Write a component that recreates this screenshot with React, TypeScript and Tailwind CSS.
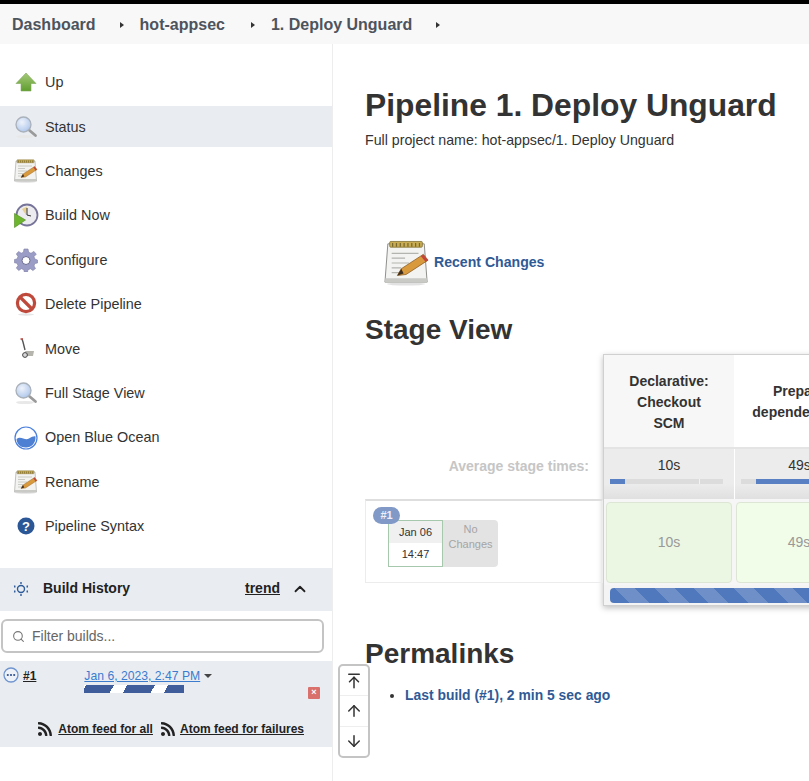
import { ArrowDown, ArrowUp, ArrowUpToLine, ChevronUp, Search } from "lucide-react"
import { FaRss } from "react-icons/fa"

function UpIcon() {
  return (
    <svg width="24" height="24" viewBox="0 0 24 24">
      <defs>
        <linearGradient id="up" x1="0" y1="0" x2="0" y2="1">
          <stop offset="0" stopColor="#a6c97a" />
          <stop offset="1" stopColor="#5f9e2e" />
        </linearGradient>
      </defs>
      <path d="M12 2 L22 12.5 H17 V20 H7 V12.5 H2 Z" fill="url(#up)" stroke="#7fa75a" strokeWidth="0.6" />
    </svg>
  )
}

function GlassIcon() {
  return (
    <svg width="24" height="24" viewBox="0 0 24 24">
      <defs>
        <radialGradient id="glass" cx="0.4" cy="0.35" r="0.8">
          <stop offset="0" stopColor="#eef3fb" />
          <stop offset="1" stopColor="#a3bfe9" />
        </radialGradient>
      </defs>
      <ellipse cx="11" cy="21.5" rx="9" ry="1.6" fill="#e8e8e8" />
      <path d="M15 15 L21.5 20.5" stroke="#9a9a9a" strokeWidth="2.8" strokeLinecap="round" />
      <circle cx="9.5" cy="9.5" r="7.5" fill="url(#glass)" stroke="#aab1ba" strokeWidth="1.3" />
    </svg>
  )
}

function NoteIcon({ size = 24 }: { size?: number }) {
  return (
    <svg width={size} height={size} viewBox="0 0 48 48">
      <ellipse cx="23" cy="46" rx="20" ry="1.6" fill="#e2e2e2" />
      <path d="M4 4 H42 L45 44 H1 Z" fill="#f3f3f1" stroke="#8a8a86" strokeWidth="1" />
      <path d="M1.5 40 H44.7 L45 44.5 H1 Z" fill="#c9c9c6" />
      <rect x="6" y="1.5" width="34" height="6" rx="1" fill="#c9ac52" stroke="#7b6a2d" strokeWidth="0.8" />
      <path d="M9 3 V7 M13 3 V7 M17 3 V7 M21 3 V7 M25 3 V7 M29 3 V7 M33 3 V7 M37 3 V7" stroke="#77682f" strokeWidth="1.3" />
      <path d="M8 14 H36 M8 19 H22 M8 24 H26 M8 29 H18 M8 34 H16" stroke="#b3b3b0" strokeWidth="1.3" />
      <path d="M14 37 L18 30 L41 15 L46 21 L23 36 Z" fill="#d99a3d" stroke="#8a5a22" strokeWidth="0.8" />
      <path d="M41 15 L46 21 L43.5 23 L38.5 17 Z" fill="#c2453b" />
      <path d="M14 37 L18 30 L20.5 35 Z" fill="#3d2d1e" />
    </svg>
  )
}

function BuildIcon() {
  return (
    <svg width="26" height="26" viewBox="0 0 26 26">
      <circle cx="14" cy="12" r="10.5" fill="#ececf0" stroke="#77749a" strokeWidth="1.8" />
      <path d="M14 3.5 L9 6 L13 12 Z" fill="#e6cf8f" />
      <path d="M14 5 V12 L18 13" fill="none" stroke="#333" strokeWidth="1" />
      <path d="M1.5 10.5 L12.5 17 L1.5 24.5 Z" fill="#6eb52f" stroke="#4c8a1a" strokeWidth="0.6" />
    </svg>
  )
}

function GearIcon() {
  return (
    <svg width="24" height="24" viewBox="0 0 24 24">
      <path
        d="M10 1 H14 L14.7 4.3 L17 5.3 L19.9 3.4 L22.3 6.2 L20 8.6 L20.8 11 L23.5 12 V15 L20.8 15.5 L20 18 L21.5 20.5 L18.9 22.6 L16.6 20.8 L14 21.7 L13.5 24 H10.3 L9.8 21.7 L7.3 20.7 L4.8 22.5 L2.3 20.1 L4 17.6 L3 15.2 L0.5 14.8 V11.5 L3 11 L4 8.4 L2.3 6 L4.6 3.5 L7.2 5.2 L9.4 4.3 Z"
        fill="#9c9dc6"
        stroke="#7f80a6"
        strokeWidth="0.6"
      />
      <circle cx="12" cy="12.5" r="4" fill="#fff" stroke="#6b6c92" strokeWidth="1" />
    </svg>
  )
}

function NoIcon() {
  return (
    <svg width="24" height="24" viewBox="0 0 24 24">
      <ellipse cx="12" cy="22.5" rx="8" ry="1.2" fill="#e5e5e5" />
      <circle cx="12" cy="11" r="8.6" fill="#fff" stroke="#bf4a3c" strokeWidth="3.2" />
      <path d="M6 5 L18 17" stroke="#bf4a3c" strokeWidth="3.2" />
    </svg>
  )
}

function MoveIcon() {
  return (
    <svg width="24" height="24" viewBox="0 0 24 24">
      <path d="M8 2 L9 5 L11 13" fill="none" stroke="#555" strokeWidth="1.4" />
      <path d="M6.5 2 H9" stroke="#b8443c" strokeWidth="1.5" />
      <path d="M11 14 H20 L19 19 H13 Z" fill="#b5b5ae" />
      <circle cx="11" cy="18" r="2.4" fill="#d8d8d8" stroke="#444" strokeWidth="1" />
    </svg>
  )
}

function OceanIcon() {
  return (
    <svg width="24" height="24" viewBox="0 0 24 24">
      <circle cx="12" cy="12" r="11" fill="#fff" stroke="#4a7fdc" strokeWidth="1.2" />
      <path d="M2.5 13 C7 9.5 11 15 15 12.5 C18 10.8 20 10 21.5 10.5 C22 17 17.5 21.5 12 21.5 C6.5 21.5 2.8 18 2.5 13 Z" fill="#4d7fd3" />
    </svg>
  )
}

function HelpIcon() {
  return (
    <svg width="24" height="24" viewBox="0 0 24 24">
      <circle cx="12" cy="12" r="8.5" fill="#2c5796" />
      <text x="12" y="16.5" textAnchor="middle" fontSize="13" fontWeight="700" fill="#fff" fontFamily="Liberation Sans">?</text>
    </svg>
  )
}

function BuildHistoryIcon() {
  return (
    <svg width="16" height="16" viewBox="0 0 16 16" fill="none" stroke="#2d5a99">
      <circle cx="8" cy="8" r="3.5" strokeWidth="1.4" />
      <path d="M8 1 V3 M8 13 V15 M1.5 4.5 L2 6.5 M14.5 4.5 L14 6.5 M1.5 11.5 L2 9.5 M14.5 11.5 L14 9.5" strokeWidth="1.4" />
    </svg>
  )
}

function RunningIcon() {
  return (
    <svg width="16" height="16" viewBox="0 0 16 16">
      <circle cx="8" cy="8" r="7" fill="#eef2f8" stroke="#6f94cf" strokeWidth="1.3" />
      <circle cx="4.8" cy="8" r="1.1" fill="#2d4f8f" />
      <circle cx="8" cy="8" r="1.1" fill="#2d4f8f" />
      <circle cx="11.2" cy="8" r="1.1" fill="#2d4f8f" />
    </svg>
  )
}

const tasks = [
  { label: "Up", icon: <UpIcon /> },
  { label: "Status", icon: <GlassIcon />, active: true },
  { label: "Changes", icon: <NoteIcon /> },
  { label: "Build Now", icon: <BuildIcon /> },
  { label: "Configure", icon: <GearIcon /> },
  { label: "Delete Pipeline", icon: <NoIcon /> },
  { label: "Move", icon: <MoveIcon /> },
  { label: "Full Stage View", icon: <GlassIcon /> },
  { label: "Open Blue Ocean", icon: <OceanIcon /> },
  { label: "Rename", icon: <NoteIcon /> },
  { label: "Pipeline Syntax", icon: <HelpIcon /> },
]

function Crumb({ label, gap }: { label: string; gap: string }) {
  return (
    <div className={`flex items-center ${gap}`}>
      <span className="text-[16px] font-bold text-[#4d545d]">{label}</span>
      <span className="h-0 w-0 border-y-[3.5px] border-l-[4px] border-y-transparent border-l-[#333]" />
    </div>
  )
}

function AvgBar({ from, to, tick }: { from: number; to: number; tick?: number }) {
  return (
    <div className="relative ml-[6px] mr-[11px] h-[5px] bg-[#dcdcdc]">
      <div className="absolute inset-y-0 bg-[#5a80c4]" style={{ left: from, width: to - from }} />
      {tick ? <div className="absolute inset-y-0 w-px bg-[#f2f2f2]" style={{ left: tick }} /> : null}
    </div>
  )
}

export default function App() {
  return (
    <div className="relative flex h-[781px] w-[809px] flex-col overflow-hidden bg-white font-['Liberation_Sans',sans-serif] text-[14px] text-[#333]">
      <div className="h-1 bg-black" />
      <nav className="flex h-10 items-center gap-[16px] bg-[#f8f8f8] pl-3 pt-[1px]">
        <Crumb label="Dashboard" gap="gap-[24px]" />
        <Crumb label="hot-appsec" gap="gap-[26px]" />
        <Crumb label="1. Deploy Unguard" gap="gap-[24px]" />
      </nav>

      <div className="flex flex-1">
        <aside className="flex w-[333px] shrink-0 flex-col border-r border-[#ededed] pt-[18px]">
          <ul className="flex flex-col gap-[3.4px]">
            {tasks.map((t) => (
              <li
                key={t.label}
                className={`flex h-[41px] items-center pl-[13px] ${t.active ? "bg-[#e9edf2]" : ""}`}
              >
                <span className="flex w-[26px] justify-center">{t.icon}</span>
                <span className="ml-[6px] pt-[1px] text-[14.4px] text-[#333]">{t.label}</span>
              </li>
            ))}
          </ul>

          <div className="mt-[21px] flex h-[43px] items-center bg-[#e9edf2] pb-[1px] pl-[13px] pr-[23px]">
            <BuildHistoryIcon />
            <span className="ml-[14px] flex-1 font-bold text-[#222]">Build History</span>
            <a className="mr-[11px] font-bold text-[#222] underline">trend</a>
            <ChevronUp size={18} strokeWidth={2.4} className="text-[#222]" />
          </div>

          <div className="mx-[1px] mt-2 flex h-[34px] w-[323px] items-center rounded-[6px] border-2 border-[#c4c4c4] pl-[9px] pt-[1px]">
            <Search size={13} className="text-[#777]" />
            <span className="ml-[7px] text-[#666]">Filter builds...</span>
          </div>

          <div className="mt-2 h-[86px] bg-[#e9edf2]">
            <div className="flex h-[47px] pl-[3px] pt-[6px]">
              <RunningIcon />
              <a className="ml-[4px] text-[12px] font-bold text-[#222] underline">#1</a>
              <div className="ml-[48px] flex w-[130px] flex-col">
                <div className="flex items-center">
                  <a className="text-[12.2px] font-normal text-[#3b7ccf] underline">Jan 6, 2023, 2:47 PM</a>
                  <span className="ml-[4px] h-0 w-0 border-x-[4px] border-t-[4px] border-x-transparent border-t-[#444]" />
                </div>
                <div className="h-2 w-[100px] bg-[repeating-linear-gradient(120deg,#fff_0,#fff_2px,#3f5d9b_2px,#3f5d9b_26px,#fff_26px,#fff_35.5px)]" />
              </div>
              <div className="ml-auto mr-[12px] mt-[20px] flex h-3 w-3 items-center justify-center rounded-[1px] bg-[#d9706b] text-[9px] font-bold leading-none text-white">
                ×
              </div>
            </div>
            <div className="mt-[12px] flex items-center justify-end gap-[7px] pr-[28px] text-[12px] font-bold text-[#222]">
              <span className="flex items-center gap-[5px]">
                <FaRss size={16} className="text-[#222]" />
                <a className="underline">Atom feed for all</a>
              </span>
              <span className="flex items-center gap-[4px]">
                <FaRss size={16} className="text-[#222]" />
                <a className="underline">Atom feed for failures</a>
              </span>
            </div>
          </div>
        </aside>

        <main className="min-w-0 flex-1 pl-[32px] pt-[43px]">
          <h1 className="text-[31.8px] font-bold leading-[36px] text-[#333]">Pipeline 1. Deploy Unguard</h1>
          <p className="mt-[7px] text-[14.2px] leading-5">Full project name: hot-appsec/1. Deploy Unguard</p>

          <div className="ml-[19px] mt-[90px] flex items-center">
            <NoteIcon size={46} />
            <a className="ml-[4px] text-[14.1px] font-bold text-[#2f5a96]">Recent Changes</a>
          </div>

          <h2 className="mt-[28px] text-[28px] font-bold leading-8 text-[#333]">Stage View</h2>

          <div className="mt-[8px] flex w-[476px]">
            <div className="w-[238px] shrink-0 pt-[93px]">
              <div className="flex h-[52px] items-start justify-end pr-[14px] pt-[9px] font-bold text-[#c6c6c6]">
                Average stage times:
              </div>
              <div className="relative h-[84px] border border-t-2 border-[#ececec] border-t-[#dedede]">
                <div className="absolute left-[7px] top-[6px] z-10 flex h-[17px] w-[27px] items-center justify-center rounded-full bg-[#8099c6] text-[11px] font-bold text-[#eef]">
                  #1
                </div>
                <div className="ml-[22px] mt-[19px] flex h-[47px]">
                  <div className="flex w-[55px] flex-col border border-[#a6c9ae] text-center text-[11px]">
                    <div className="flex h-[22px] items-center justify-center bg-[#f0f0f0] text-[#333]">Jan 06</div>
                    <div className="flex flex-1 items-center justify-center bg-white text-[#333]">14:47</div>
                  </div>
                  <div className="w-[55px] rounded-r-[4px] bg-[#e3e3e3] pt-[2px] text-center text-[11px] leading-[15px] text-[#a5a5a5]">
                    No
                    <br />
                    Changes
                  </div>
                </div>
              </div>
            </div>

            <div className="h-[252px] w-[400px] shrink-0 border-l border-t border-b border-[#d0d0d0] shadow-[0_2px_6px_rgba(0,0,0,0.25)]">
              <div className="flex h-[92px] text-center font-bold leading-[21px] text-[#333]">
                <div className="flex w-[130px] items-center justify-center bg-[#f7f7f7] pt-[2px]">
                  Declarative:
                  <br />
                  Checkout
                  <br />
                  SCM
                </div>
                <div className="flex w-[130px] items-center justify-center bg-white pt-[2px]">
                  Prepare
                  <br />
                  dependencies
                </div>
              </div>
              <div className="flex h-[52px] border-t-2 border-[#e4e4e4] bg-white text-center">
                <div className="w-[130px] bg-[linear-gradient(#ececec_70%,#e0e0e0)] pt-[2px]">
                  <div className="mb-[4px] mt-[4px] leading-5 text-[#333]">10s</div>
                  <AvgBar from={0} to={15} tick={89} />
                </div>
                <div className="w-[130px] border-l border-white bg-[linear-gradient(#ececec_70%,#e0e0e0)] pt-[2px]">
                  <div className="mb-[4px] mt-[4px] leading-5 text-[#333]">49s</div>
                  <AvgBar from={15} to={112} />
                </div>
              </div>
              <div className="flex h-[86px] gap-[4px] bg-[#f6f6f6] px-[2px] pt-[3px]">
                <div className="flex h-[81px] w-[126px] items-center justify-center rounded-[4px] border border-[#dde6d4] bg-[#ebf6e3] text-[#999]">
                  10s
                </div>
                <div className="flex h-[81px] w-[126px] items-center justify-center rounded-[4px] border border-[#dde6d4] bg-[#f1fde9] text-[#999]">
                  49s
                </div>
              </div>
              <div className="h-[20px] bg-[#f4f4f4] pl-[6px] pt-[3px]">
                <div className="h-[15px] rounded-l-[4px] bg-[repeating-linear-gradient(45deg,#5079bd_0,#5079bd_14px,#6f8fc8_14px,#6f8fc8_28px)]" />
              </div>
            </div>
          </div>

          <h2 className="mt-[32px] text-[28px] font-bold leading-8 text-[#333]">Permalinks</h2>
          <ul className="ml-[40px] mt-[15px] list-disc text-[13.9px] font-bold text-[#2f5a96] marker:text-[#333]">
            <li>Last build (#1), 2 min 5 sec ago</li>
          </ul>
        </main>
      </div>

      <div className="absolute left-[338px] top-[664px] flex h-[94px] w-[32px] flex-col rounded-[5px] border-2 border-[#c4c4c4] bg-white text-[#333]">
        <div className="flex flex-1 items-center justify-center border-b border-[#eee]">
          <ArrowUpToLine size={18} />
        </div>
        <div className="flex flex-1 items-center justify-center border-b border-[#eee]">
          <ArrowUp size={18} />
        </div>
        <div className="flex flex-1 items-center justify-center">
          <ArrowDown size={18} />
        </div>
      </div>
    </div>
  )
}
